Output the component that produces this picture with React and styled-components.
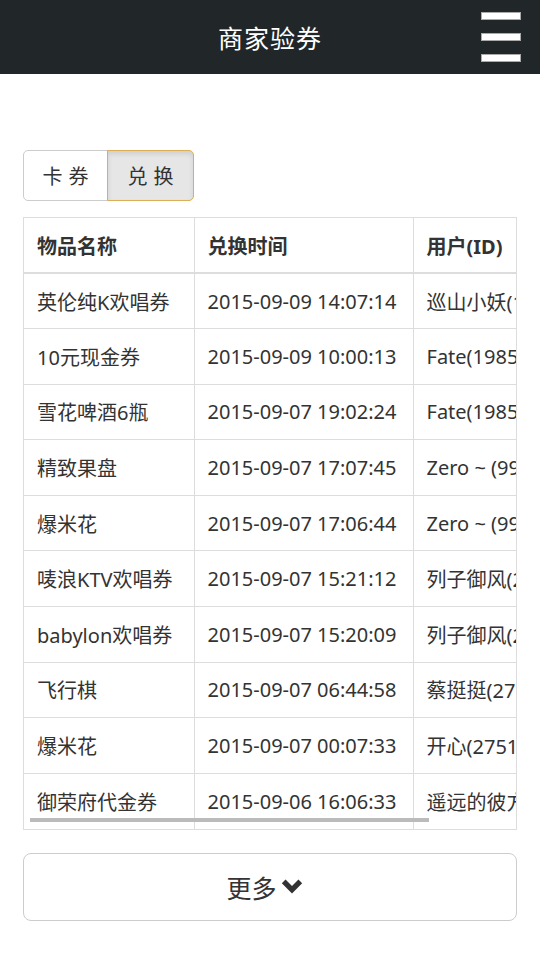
import styled, { createGlobalStyle } from 'styled-components';
import { useState } from 'react';

const GlobalStyle = createGlobalStyle`
    html, body {
        margin: 0;
        padding: 0;
        background: #fff;
    }
    body {
        font-family: "Noto Sans", "Noto Sans CJK SC", sans-serif;
        color: #333;
    }
    * { box-sizing: border-box; }
`;

const Page = styled.div`
    width: 540px;
    min-height: 960px;
    background: #fff;
`;
const NavBar = styled.div`
    height: 74px;
    background: #212629;
    display: flex;
    align-items: center;
    justify-content: center;
    position: relative;
`;
const Title = styled.h1`
    margin: 0;
    font-size: 25px;
    font-weight: normal;
    color: #fff;
    letter-spacing: 1px;
`;
const MenuButton = styled.div`
    position: absolute;
    right: 19px;
    top: 12px;
    width: 40px;
    height: 50px;
    display: flex;
    flex-direction: column;
    justify-content: space-between;
    & > span {
        display: block;
        height: 8px;
        background: #fff;
        border: 1px solid #aaa;
    }
`;
const Content = styled.div`
    padding: 76px 23px 0;
`;
const TabGroup = styled.div`
    display: flex;
    margin-bottom: 16px;
`;
const Tab = styled.div`
    width: ${props => props.w}px;
    height: 51px;
    display: flex;
    align-items: center;
    justify-content: center;
    font-size: 20px;
    letter-spacing: 6px;
    padding-left: 6px;
    color: #333;
    border: 1px solid ${props => props.active ? '#dcae55' : '#ccc'};
    background: ${props => props.active ? '#e6e6e6' : '#fff'};
    box-shadow: ${props => props.active ? 'inset 0 3px 5px rgba(0,0,0,0.1)' : 'none'};
    border-radius: ${props => props.first ? '5px 0 0 5px' : '0 5px 5px 0'};
    margin-left: ${props => props.first ? '0' : '-1px'};
    cursor: pointer;
`;
const TableWrap = styled.div`
    position: relative;
    width: 494px;
    border: 1px solid #ddd;
    overflow: hidden;
`;
const Table = styled.table`
    border-collapse: collapse;
    width: 680px;
    font-size: 20px;
`;
const Th = styled.th`
    text-align: left;
    font-weight: bold;
    height: 55px;
    padding: 0 13px;
    border-right: 1px solid #ddd;
    border-bottom: 2px solid #ddd;
    white-space: nowrap;
    color: #333;
`;
const Td = styled.td`
    height: 55.6px;
    padding: 0 13px;
    border-right: 1px solid #ddd;
    border-top: 1px solid #ddd;
    white-space: nowrap;
    color: #333;
`;
const ScrollThumb = styled.div`
    position: absolute;
    left: 6px;
    bottom: 7px;
    width: 399px;
    height: 4px;
    background: #bbb;
`;
const MoreButton = styled.div`
    margin-top: 23px;
    height: 68px;
    border: 1px solid #ccc;
    border-radius: 8px;
    display: flex;
    align-items: center;
    justify-content: center;
    gap: 3px;
    padding-right: 10px;
    font-size: 25px;
    color: #333;
    cursor: pointer;
`;

const rows = [
    ['英伦纯K欢唱券', '2015-09-09 14:07:14', '巡山小妖(102938)'],
    ['10元现金券', '2015-09-09 10:00:13', 'Fate(19850312)'],
    ['雪花啤酒6瓶', '2015-09-07 19:02:24', 'Fate(19850312)'],
    ['精致果盘', '2015-09-07 17:07:45', 'Zero ~ (99128)'],
    ['爆米花', '2015-09-07 17:06:44', 'Zero ~ (99128)'],
    ['唛浪KTV欢唱券', '2015-09-07 15:21:12', '列子御风(20931)'],
    ['babylon欢唱券', '2015-09-07 15:20:09', '列子御风(20931)'],
    ['飞行棋', '2015-09-07 06:44:58', '蔡挺挺(27739)'],
    ['爆米花', '2015-09-07 00:07:33', '开心(275123)'],
    ['御荣府代金券', '2015-09-06 16:06:33', '遥远的彼方(30021)'],
];

export default function App() {
    const [tab, setTab] = useState(1);
    return (
        <Page>
            <GlobalStyle />
            <NavBar>
                <Title>商家验券</Title>
                <MenuButton><span /><span /><span /></MenuButton>
            </NavBar>
            <Content>
                <TabGroup>
                    <Tab first w={85} active={tab === 0} onClick={() => setTab(0)}>卡券</Tab>
                    <Tab w={87} active={tab === 1} onClick={() => setTab(1)}>兑换</Tab>
                </TabGroup>
                <TableWrap>
                    <Table>
                        <colgroup>
                            <col style={{width: 170}} />
                            <col style={{width: 219}} />
                            <col />
                        </colgroup>
                        <thead>
                            <tr>
                                <Th>物品名称</Th>
                                <Th>兑换时间</Th>
                                <Th>用户(ID)</Th>
                            </tr>
                        </thead>
                        <tbody>
                            {rows.map((r, i) => (
                                <tr key={`row${i}`}>
                                    <Td>{r[0]}</Td>
                                    <Td>{r[1]}</Td>
                                    <Td>{r[2]}</Td>
                                </tr>
                            ))}
                        </tbody>
                    </Table>
                    <ScrollThumb />
                </TableWrap>
                <MoreButton>
                    更多
                    <svg width="24" height="22" viewBox="0 0 26 22">
                        <path d="M2 7 L6 3 L13 10 L20 3 L24 7 L13 18 Z" fill="#333" />
                    </svg>
                </MoreButton>
            </Content>
        </Page>
    );
}
